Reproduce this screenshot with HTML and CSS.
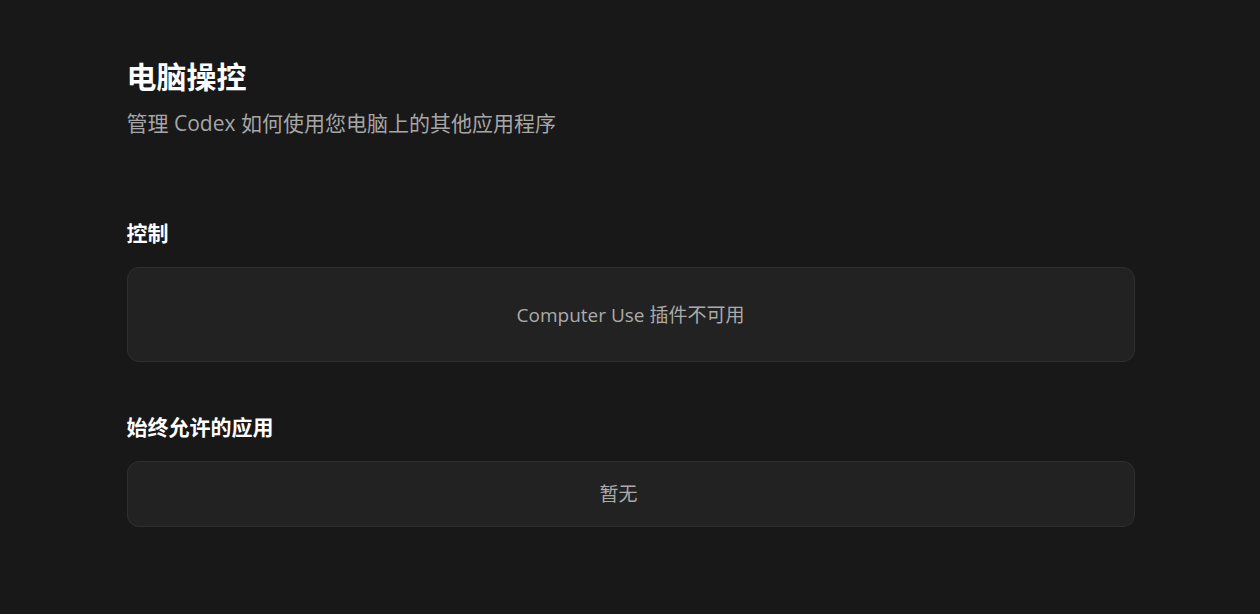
FILE: index.html
```html
<!DOCTYPE html>
<html lang="zh-CN">
<head>
<meta charset="utf-8">
<title>电脑操控</title>
<link rel="stylesheet" href="styles.css">
</head>
<body>
<main class="page">
  <header class="page-header">
    <h1 class="page-title">电脑操控</h1>
    <p class="page-subtitle">管理 Codex 如何使用您电脑上的其他应用程序</p>
  </header>

  <section class="section section-control">
    <h2 class="section-title">控制</h2>
    <div class="card card-tall">
      <span class="card-text">Computer Use 插件不可用</span>
    </div>
  </section>

  <section class="section section-apps">
    <h2 class="section-title">始终允许的应用</h2>
    <div class="card card-short">
      <span class="card-text card-text-empty">暂无</span>
    </div>
  </section>
</main>
</body>
</html>
```

FILE: styles.css
```css
html, body {
  margin: 0;
  padding: 0;
  background: #181818;
  height: 100%;
}

body {
  font-family: "Open Sans", "Noto Sans CJK SC", sans-serif;
  color: #ffffff;
}

.page {
  max-width: 1008px;
  margin: 0 auto;
  padding: 57px 0 0 1px;
  box-sizing: content-box;
}

.page-header {
  display: flex;
  flex-direction: column;
  gap: 12px;
}

.page-title {
  margin: 0;
  font-size: 30px;
  line-height: 40px;
  font-weight: 600;
  color: #ffffff;
}

.page-subtitle {
  margin: 0;
  font-size: 21px;
  line-height: 28px;
  font-weight: 400;
  color: #a6a6a6;
}

.section {
  display: flex;
  flex-direction: column;
  gap: 20px;
}

.section-control {
  margin-top: 82px;
}

.section-apps {
  margin-top: 51px;
}

.section-title {
  margin: 0;
  font-size: 21px;
  line-height: 28px;
  font-weight: 700;
  color: #ffffff;
}

.card {
  display: flex;
  align-items: center;
  justify-content: center;
  box-sizing: border-box;
  background: #222222;
  border: 1px solid #2f2f2f;
  border-radius: 12px;
}

.card-tall {
  height: 95px;
}

.card-short {
  height: 66px;
}

.card-text {
  font-size: 19px;
  line-height: 26px;
  color: #ababab;
}

.card-text-empty {
  margin-right: 24px;
}
```
